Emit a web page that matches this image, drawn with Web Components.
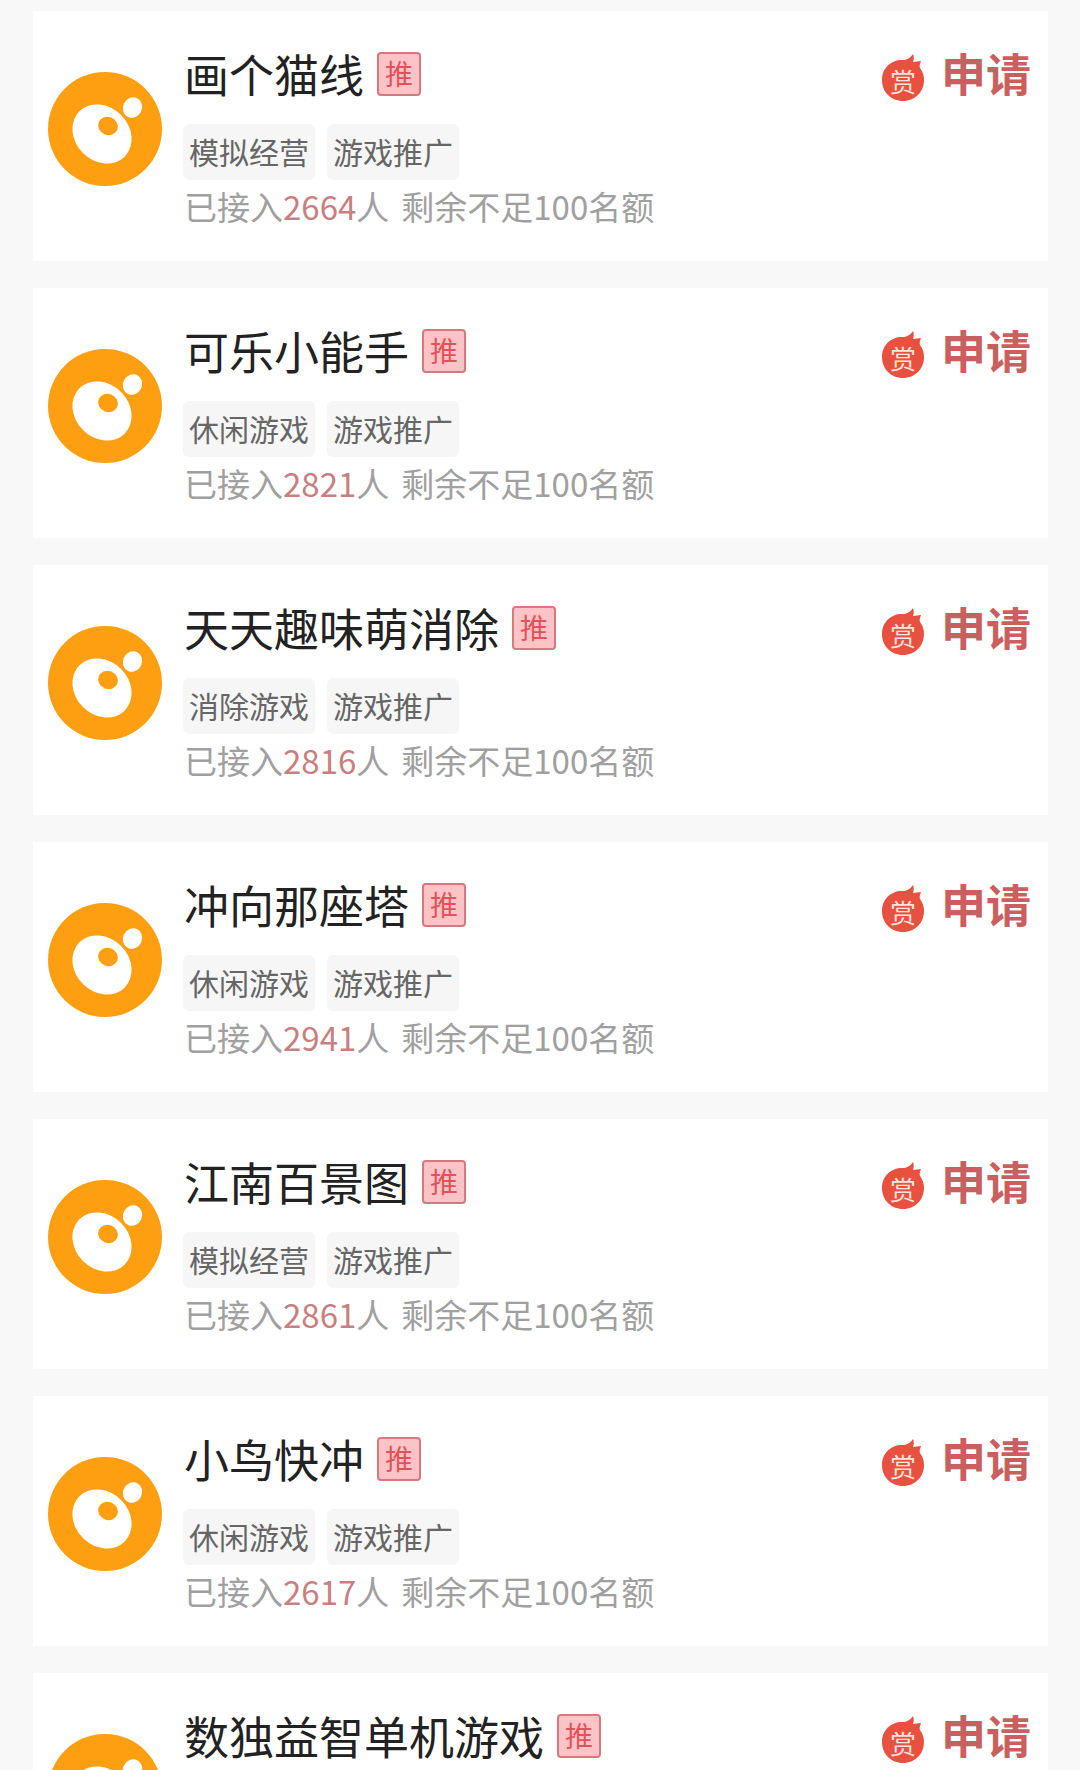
<!DOCTYPE html>
<html>
<head>
<meta charset="utf-8">
<style>
  html, body { margin: 0; height: 1770px; overflow: hidden; background: #f8f8f8; }
</style>
</head>
<body>
<game-list></game-list>
<script>
const FONT = '"Noto Sans CJK SC", "Noto Sans", sans-serif';

class GameAvatar extends HTMLElement {
  constructor() {
    super();
    this.attachShadow({ mode: 'open' }).innerHTML = `
      <style>
        :host { display: block; width: 114px; height: 114px; flex: none; }
        svg { display: block; }
      </style>
      <svg width="114" height="114" viewBox="0 0 114 114">
        <circle cx="57" cy="57" r="57" fill="#fd9f10"/>
        <ellipse cx="54" cy="62" rx="32" ry="27" transform="rotate(45 54 62)" fill="#fff"/>
        <ellipse cx="60" cy="54" rx="10" ry="9" transform="rotate(20 60 54)" fill="#fd9f10"/>
        <ellipse cx="84.5" cy="35.5" rx="9.5" ry="10.5" transform="rotate(25 84.5 35.5)" fill="#fff"/>
      </svg>`;
  }
}

class GameTag extends HTMLElement {
  constructor() {
    super();
    this.attachShadow({ mode: 'open' }).innerHTML = `
      <style>
        :host {
          display: block;
          height: 56px;
          line-height: 54px;
          padding: 0 6px;
          font-size: 30px;
          color: #666;
          background: #f6f6f6;
          border-radius: 6px;
        }
      </style>
      <slot></slot>`;
  }
}

class RecBadge extends HTMLElement {
  constructor() {
    super();
    this.attachShadow({ mode: 'open' }).innerHTML = `
      <style>
        :host {
          display: block;
          box-sizing: border-box;
          width: 44px;
          height: 44px;
          line-height: 38px;
          text-align: center;
          font-size: 28px;
          color: #e2525a;
          background: #fdc3c6;
          border: 2px solid #d6787c;
          border-radius: 4px;
        }
      </style>
      <slot></slot>`;
  }
}

class ApplyAction extends HTMLElement {
  constructor() {
    super();
    this.attachShadow({ mode: 'open' }).innerHTML = `
      <style>
        :host { display: flex; align-items: center; gap: 16px; height: 50px; }
        .reward { position: relative; width: 44px; height: 48px; margin-top: 8px; }
        svg { display: block; }
        .reward span {
          position: absolute;
          left: 0;
          right: 0;
          top: 13px;
          text-align: center;
          font-size: 26px;
          line-height: 30px;
          color: #fde4dc;
        }
        .label { font-size: 45px; line-height: 50px; font-weight: 700; color: #c9605f; }
      </style>
      <div class="reward">
        <svg width="44" height="48" viewBox="0 0 44 48">
          <path d="M22 48C10 48 1 39 1 27C1 15 10 7 21 7C26 7 29 5 32 1C33 4 33 6 32 9C35 9 37 8 40 8C39 11 38 13 39 15C42 19 43 23 43 27C43 39 34 48 22 48Z" fill="#e8503f"/>
        </svg>
        <span>赏</span>
      </div>
      <span class="label">申请</span>`;
  }
}

class GameCard extends HTMLElement {
  constructor() {
    super();
    const name = this.getAttribute('name');
    const tag = this.getAttribute('tag');
    const count = this.getAttribute('count');
    // the last card is cut by the window, only its title row is visible
    const details = tag ? `
        <div class="tags"><game-tag>${tag}</game-tag><game-tag>游戏推广</game-tag></div>
        <div class="stat">已接入<b>${count}</b>人<i>剩余不足100名额</i></div>` : '';
    this.attachShadow({ mode: 'open' }).innerHTML = `
      <style>
        :host {
          display: flex;
          align-items: flex-start;
          box-sizing: border-box;
          height: 250px;
          padding: 40px 17px 0 15px;
          background: #fff;
          font-family: ${FONT};
        }
        game-avatar { margin: 21px 22px 0 0; }
        .info { flex: 1; min-width: 0; margin-top: -2px; }
        .title { display: flex; align-items: center; gap: 13px; height: 50px; }
        .title span { font-size: 45px; line-height: 50px; color: #222; white-space: nowrap; }
        .tags { display: flex; gap: 12px; margin-top: 25px; margin-left: -1px; }
        .stat { font-size: 33px; line-height: 46px; height: 46px; margin-top: 3px; color: #a0a0a0; white-space: nowrap; }
        .stat b { font-weight: 400; color: #c97f7f; }
        .stat i { font-style: normal; margin-left: 12px; }
        apply-action { margin-top: -3px; }
      </style>
      <game-avatar></game-avatar>
      <div class="info">
        <div class="title"><span>${name}</span><rec-badge>推</rec-badge></div>${details}
      </div>
      <apply-action></apply-action>`;
  }
}

const games = [
  { name: '画个猫线', tag: '模拟经营', count: 2664 },
  { name: '可乐小能手', tag: '休闲游戏', count: 2821 },
  { name: '天天趣味萌消除', tag: '消除游戏', count: 2816 },
  { name: '冲向那座塔', tag: '休闲游戏', count: 2941 },
  { name: '江南百景图', tag: '模拟经营', count: 2861 },
  { name: '小鸟快冲', tag: '休闲游戏', count: 2617 },
  { name: '数独益智单机游戏' },
];

class GameList extends HTMLElement {
  constructor() {
    super();
    const cards = games.map((g) => {
      const extra = g.tag ? ` tag="${g.tag}" count="${g.count}"` : '';
      return `<game-card name="${g.name}"${extra}></game-card>`;
    }).join('');
    this.attachShadow({ mode: 'open' }).innerHTML = `
      <style>
        :host {
          display: flex;
          flex-direction: column;
          gap: 27px;
          padding: 11px 32px 0 33px;
        }
      </style>
      ${cards}`;
  }
}

customElements.define('game-avatar', GameAvatar);
customElements.define('game-tag', GameTag);
customElements.define('rec-badge', RecBadge);
customElements.define('apply-action', ApplyAction);
customElements.define('game-card', GameCard);
customElements.define('game-list', GameList);
</script>
</body>
</html>
